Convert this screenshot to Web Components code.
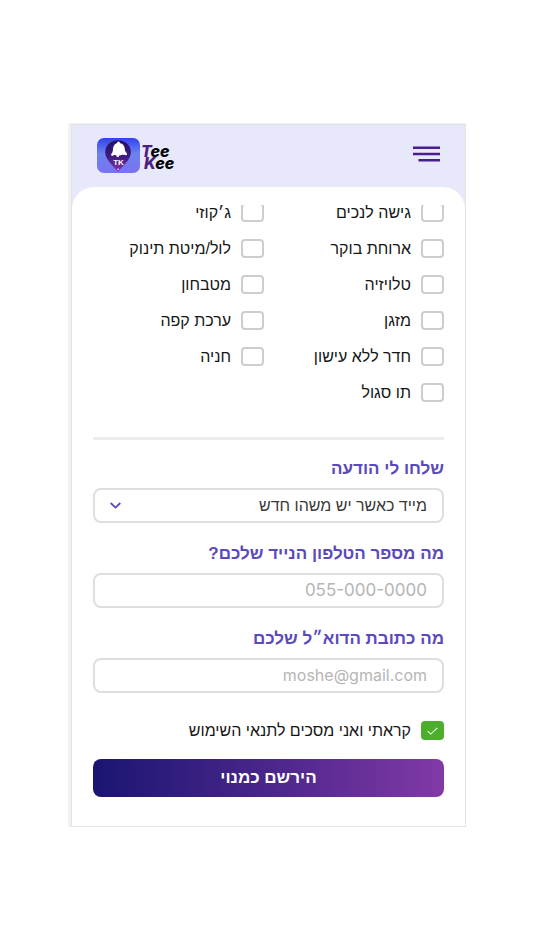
<!DOCTYPE html>
<html lang="he" dir="rtl">
<head>
<meta charset="utf-8">
<meta name="viewport" content="width=device-width, initial-scale=1">
<title>TeeKee</title>
<style>
body { margin: 0; background: #fff; color: #161616; font-family: "Liberation Sans", "Noto Sans", sans-serif; font-size: 16px; }
</style>
</head>
<body>
<tk-app></tk-app>

<template id="t-app">
<style>
:host { display: block; padding: 123px 68px; }
.edge { background: #f2f2f3; padding: 1px 0 0 3px; direction: ltr; }
.card { direction: rtl; border: 1px solid #e3e3e8; background: #e7e8fa; }
main { background: #fff; border-radius: 22px 22px 0 0; padding: 18px 21px 29px; }
.view { overflow: hidden; padding-bottom: 4px; }
.amenities { display: grid; grid-template-columns: 1fr 1fr; column-gap: 9px; row-gap: 17px; margin-top: -2px; }
hr { border: 0; height: 3px; margin: 31px 0 16px; background: #ececec; }
form { display: grid; gap: 18px; }
.end { display: grid; gap: 19px; padding-top: 10px; }
.submit { height: 38px; border: 0; border-radius: 8px; padding: 0; color: #fff; font: bold 17px/24px "Liberation Sans", sans-serif; background: linear-gradient(90deg, #1a1572, #4a268a 50%, #8239a7); }
</style>
<div class="edge"><div class="card">
<tk-header></tk-header>
<main>
<div class="view"><div class="amenities">
<tk-check>גישה לנכים</tk-check><tk-check>ג׳קוזי</tk-check>
<tk-check>ארוחת בוקר</tk-check><tk-check>לול/מיטת תינוק</tk-check>
<tk-check>טלויזיה</tk-check><tk-check>מטבחון</tk-check>
<tk-check>מזגן</tk-check><tk-check>ערכת קפה</tk-check>
<tk-check>חדר ללא עישון</tk-check><tk-check>חניה</tk-check>
<tk-check>תו סגול</tk-check>
</div></div>
<hr>
<form>
<tk-select label="שלחו לי הודעה" option="מייד כאשר יש משהו חדש"></tk-select>
<tk-input label="מה מספר הטלפון הנייד שלכם?" type="tel" placeholder="055-000-0000"></tk-input>
<tk-input label="מה כתובת הדוא״ל שלכם" type="email" placeholder="moshe@gmail.com"></tk-input>
<div class="end">
<tk-check checked>קראתי ואני מסכים לתנאי השימוש</tk-check>
<button class="submit" type="button">הירשם כמנוי</button>
</div>
</form>
</main>
</div></div>
</template>

<template id="t-header">
<style>
:host { display: flex; justify-content: space-between; align-items: flex-start; padding: 13px 25px 14px; }
button { border: 0; background: none; padding: 8px 0 0; line-height: 0; }
</style>
<button type="button" aria-label="תפריט"><svg width="27" height="16" viewBox="0 0 27 16"><g fill="#4b1c91"><path d="M0 .5h27v2.500H0zM0 6.700h27v2.500H0zM5.500 12.900H27v2.500H5.500z"/></g></svg></button>
<tk-logo></tk-logo>
</template>

<template id="t-logo">
<style>
:host { display: flex; direction: ltr; gap: 1px; }
svg { display: block; }
.words { padding-top: 7px; font: italic 800 16px/12px "Inter", sans-serif; color: #050505; }
.words div + div { padding-left: 3px; }
b { font-weight: 800; color: #4b2080; }
</style>
<svg width="43" height="35" viewBox="0 0 43 35">
<defs>
<linearGradient id="bg" x1="0" y1="0" x2="0" y2="1"><stop offset="0" stop-color="#3440f3"/><stop offset=".45" stop-color="#6b83ef"/><stop offset="1" stop-color="#7b72f0"/></linearGradient>
<linearGradient id="pin" x1="0" y1="0" x2="0" y2="1"><stop offset="0" stop-color="#231263"/><stop offset=".5" stop-color="#3c1a7f"/><stop offset="1" stop-color="#8a36a8"/></linearGradient>
</defs>
<rect width="43" height="35" rx="7" fill="url(#bg)"/>
<path d="M21 2.200C13.500 2.200 8.200 7.500 8.200 14.300c0 6.700 6.800 12.700 12.800 19.500 6-6.800 12.900-12.800 12.900-19.500C33.900 7.500 28.500 2.200 21 2.200z" fill="url(#pin)"/>
<g fill="#fff"><circle cx="21.500" cy="5" r="1.500"/><path d="M21.600 5c4 .2 6 2.600 6.200 6.100.1 1.800.7 3 2 4.200.7.900.1 2-1 1.900-1.600-.2-2.200-.6-3.500-.5-1.300.1-2.300.9-4 .8-1.600-.1-2.700-.9-4-.5-.9.300-1.600 1.200-2.600.7-1-.5-.7-1.700.1-2.500 1.200-1.300 1-3 1.200-4.500C16.400 7 18.300 5 21.600 5z"/><path d="M19.200 16.500l2.600.3.200 2.300-2.400-.4z"/><circle cx="21.100" cy="31.300" r=".8"/></g>
<text x="21.500" y="27" text-anchor="middle" font-family="Liberation Sans, sans-serif" font-size="8" font-weight="700" fill="#fff">TK</text>
</svg>
<div class="words"><div><b>T</b>ee</div><div><b>K</b>ee</div></div>
</template>

<template id="t-check">
<style>
:host { display: block; }
label { display: flex; align-items: center; gap: 10px; height: 19px; white-space: nowrap; line-height: 18px; }
.box { display: grid; flex: none; }
.box > * { grid-area: 1 / 1; place-self: center; }
input { appearance: none; box-sizing: border-box; width: 23px; height: 19px; margin: 0; border: 2px solid #cdcdcd; border-radius: 4px; background: #fff; }
input:checked { border-color: #4baf2b; background: #4baf2b; }
svg { visibility: hidden; pointer-events: none; }
input:checked + svg { visibility: visible; }
</style>
<label><span class="box"><input type="checkbox"><svg width="11" height="8" viewBox="0 0 11 8"><path d="M.700 4.200l3 2.900L10.400.800" fill="none" stroke="#e9ffe0" stroke-width="1.100"/></svg></span><span><slot></slot></span></label>
</template>

<template id="t-input">
<style>
:host { display: grid; gap: 7px; }
label { font: bold 17px/25px "Liberation Sans", sans-serif; color: #5a4abb; }
input { box-sizing: border-box; width: 100%; height: 35px; margin: 0; padding: 0 15px 1px; border: 2px solid #dedede; border-radius: 8px; background: #fff; color: #333; font: 16px "Inter", sans-serif; direction: ltr; text-align: right; }
input[type="tel"] { font-size: 17px; }
input::placeholder { color: #b5b5b5; opacity: 1; }
</style>
<label for="f"></label><input id="f">
</template>

<template id="t-select">
<style>
:host { display: grid; gap: 7px; }
label { font: bold 17px/25px "Liberation Sans", sans-serif; color: #5a4abb; }
.wrap { display: grid; align-items: center; }
.wrap > * { grid-area: 1 / 1; }
select { appearance: none; box-sizing: border-box; width: 100%; height: 35px; margin: 0; padding: 0 15px; border: 2px solid #dedede; border-radius: 8px; background: #fff; color: #3a3a3a; font: 16px "Liberation Sans", sans-serif; }
svg { justify-self: end; margin-left: 17px; pointer-events: none; }
</style>
<label for="f"></label><div class="wrap"><select id="f"><option></option></select><svg width="11" height="7" viewBox="0 0 11 7"><path d="M.700 1l4.800 4.600L10.300 1" fill="none" stroke="#5a4abb" stroke-width="1.800"/></svg></div>
</template>

<script>
class Base extends HTMLElement {
  connectedCallback() {
    if (this.shadowRoot) return;
    const root = this.attachShadow({ mode: "open" });
    root.append(document.getElementById(this.constructor.template).content.cloneNode(true));
    this.setup(root);
  }
  setup() {}
}
class TkApp extends Base { static template = "t-app"; }
class TkHeader extends Base { static template = "t-header"; }
class TkLogo extends Base { static template = "t-logo"; }
class TkCheck extends Base {
  static template = "t-check";
  setup(root) { root.querySelector("input").checked = this.hasAttribute("checked"); }
}
class TkInput extends Base {
  static template = "t-input";
  setup(root) {
    const input = root.querySelector("input");
    root.querySelector("label").textContent = this.getAttribute("label");
    input.type = this.getAttribute("type");
    input.placeholder = this.getAttribute("placeholder");
  }
}
class TkSelect extends Base {
  static template = "t-select";
  setup(root) {
    root.querySelector("label").textContent = this.getAttribute("label");
    root.querySelector("option").textContent = this.getAttribute("option");
  }
}
customElements.define("tk-logo", TkLogo);
customElements.define("tk-header", TkHeader);
customElements.define("tk-check", TkCheck);
customElements.define("tk-input", TkInput);
customElements.define("tk-select", TkSelect);
customElements.define("tk-app", TkApp);
</script>
</body>
</html>
